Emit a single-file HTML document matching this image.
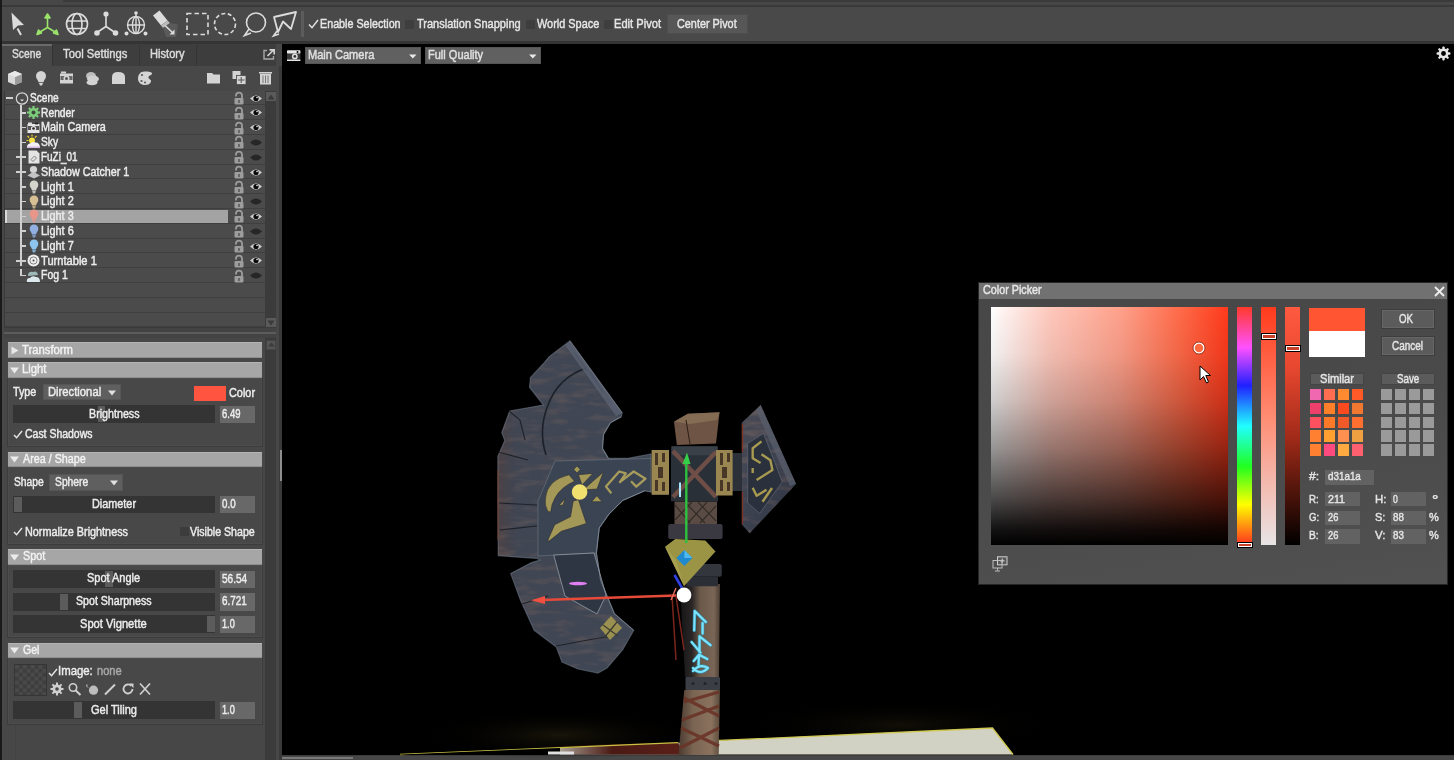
<!DOCTYPE html>
<html><head><meta charset="utf-8"><style>
*{margin:0;padding:0;box-sizing:border-box}
html,body{width:1454px;height:760px;overflow:hidden;background:#000}
body{position:relative;font-family:"Liberation Sans",sans-serif}
.a{position:absolute}
svg.a{overflow:visible}
.t{position:absolute;white-space:nowrap;line-height:1;transform-origin:0 0;font-family:"Liberation Sans",sans-serif;-webkit-text-stroke:0.45px currentColor}
</style></head><body>
<div class="a" style="left:0px;top:0px;width:1454.0px;height:6.0px;background:#474747;"></div>
<div class="a" style="left:63px;top:0px;width:1391.0px;height:2.0px;background:#3a3a3a;"></div>
<div class="a" style="left:0px;top:5px;width:1454.0px;height:2.0px;background:#393939;"></div>
<div class="a" style="left:0px;top:7px;width:1454.0px;height:34.0px;background:#494949;"></div>
<div class="a" style="left:0px;top:41px;width:1454.0px;height:3.0px;background:#343434;"></div>
<div class="a" style="left:0px;top:0px;width:1.5px;height:760.0px;background:#1a1a1a;"></div>
<div class="a" style="left:301px;top:11px;width:2.5px;height:26.0px;background:#5c5c5c;"></div>
<div class="a" style="left:405px;top:19.5px;width:9.0px;height:9.0px;background:#3e3e3e;"></div>
<div class="a" style="left:526px;top:19.5px;width:9.0px;height:9.0px;background:#3e3e3e;"></div>
<div class="a" style="left:603.5px;top:19.5px;width:9.0px;height:9.0px;background:#3e3e3e;"></div>
<svg class="a" style="left:308px;top:19px" width="11" height="10" viewBox="0 0 11 10"><path d="M1 5.5L4 8.7L10 1" fill="none" stroke="#e6e6e6" stroke-width="1.4"/></svg>
<div class="a" style="left:666.5px;top:14px;width:81.5px;height:20.0px;background:#575757;border:1px solid #4e4e4e"></div>
<svg class="a" style="left:8px;top:10px" width="290" height="28" viewBox="0 0 290 28"><path d="M3.5 2.5L16 15L10 15.5L5 20Z" fill="#dcdcdc"/><path d="M9.5 18.5L13 25" stroke="#dcdcdc" stroke-width="2"/><g stroke="#9be36a" stroke-width="1.6" fill="#9be36a" stroke-linejoin="round"><path d="M39.5 8V17.5L31 22.5M39.5 17.5L48 22.5" fill="none"/><path d="M37 8L39.5 4L42 8Z"/><path d="M29 24.5L30.5 20L33.5 23Z"/><path d="M50 24.5L48.5 20L45.5 23Z"/></g><g fill="none" stroke="#dcdcdc" stroke-width="1.6"><circle cx="69" cy="14" r="10.5"/><ellipse cx="69" cy="14" rx="5" ry="10.5"/><path d="M58.5 11H79.5M59.5 18.5H78.5"/></g><g stroke="#dcdcdc" stroke-width="1.6" fill="#dcdcdc"><path d="M98 4V16.5L89 22.5M98 16.5L107 22.5" fill="none"/><circle cx="98" cy="4" r="1.8"/><circle cx="89" cy="23" r="2"/><circle cx="107.5" cy="23" r="2"/></g><g stroke="#dcdcdc" stroke-width="1.4" fill="none"><circle cx="128" cy="15" r="8.5"/><ellipse cx="128" cy="15" rx="3.5" ry="8.5"/><path d="M119.5 15H136.5M128 2.5V24"/></g><g fill="#dcdcdc"><circle cx="128" cy="3" r="1.8"/><circle cx="118.5" cy="23.5" r="2"/><circle cx="137.5" cy="23.5" r="2"/></g><path d="M145 5.5L151.5 0.5L159.5 10.5L153 15.5Z" fill="#dcdcdc"/><path d="M153 15.5L159.5 10.5L162 13L155 18Z" fill="#bbb"/><path d="M155 18L162 13L170 14.5L168 27L158 27Z" fill="#5a5a5a"/><path d="M157 15.5L165 23" stroke="#dcdcdc" stroke-width="1.6"/><path d="M166.5 19.5V24.5H161.5Z" fill="#dcdcdc"/><rect x="179" y="3.5" width="21" height="21" fill="none" stroke="#dcdcdc" stroke-width="1.6" stroke-dasharray="4.5 3"/><circle cx="217" cy="14" r="10.5" fill="none" stroke="#dcdcdc" stroke-width="1.6" stroke-dasharray="4 2.5"/><circle cx="248" cy="12.5" r="9.5" fill="none" stroke="#dcdcdc" stroke-width="1.6"/><path d="M241 19L236.5 25.5L243 23" fill="none" stroke="#dcdcdc" stroke-width="1.6"/><path d="M266 7L288 2L283 19L275 11.5L270 22Z" fill="none" stroke="#dcdcdc" stroke-width="1.8" stroke-linejoin="round"/><path d="M269 21L265.5 26L271 24" fill="none" stroke="#dcdcdc" stroke-width="1.6"/></svg>
<div class="a" style="left:1.5px;top:44px;width:280.5px;height:22.0px;background:#3d3d3d;"></div>
<div class="a" style="left:1.5px;top:43.5px;width:50.0px;height:22.5px;background:#484848;border-top:2px solid #6a6a6a"></div>
<div class="a" style="left:52px;top:45px;width:87.5px;height:21.0px;background:#3e3e3e;border-left:1px solid #333;border-right:1px solid #353535"></div>
<div class="a" style="left:139.5px;top:45px;width:57.0px;height:21.0px;background:#3e3e3e;border-right:1px solid #353535"></div>
<div class="a" style="left:1.5px;top:66px;width:280.5px;height:694.0px;background:#484848;"></div>
<div class="a" style="left:4px;top:90.5px;width:261.5px;height:237.5px;background:#474747;border:1px solid #3a3a3a"></div>
<div class="a" style="left:265px;top:91px;width:11.0px;height:237.0px;background:#3b3b3b;"></div>
<div class="a" style="left:266px;top:92px;width:9.5px;height:9.0px;background:#5a5a5a;"></div>
<div class="a" style="left:266px;top:318px;width:9.5px;height:9.0px;background:#5a5a5a;"></div>
<svg class="a" style="left:267px;top:93.5px" width="8" height="6" viewBox="0 0 8 6"><path d="M0.5 5.5H7.5L4 0.5Z" fill="#3a3a3a"/></svg>
<svg class="a" style="left:267px;top:320px" width="8" height="6" viewBox="0 0 8 6"><path d="M0.5 0.5H7.5L4 5.5Z" fill="#3a3a3a"/></svg>
<div class="a" style="left:4px;top:328px;width:272.0px;height:10.0px;background:#434343;"></div>
<div class="a" style="left:4px;top:332px;width:272.0px;height:1.5px;background:#5c5c5c;"></div>
<div class="a" style="left:276px;top:44px;width:6.0px;height:716.0px;background:#474747;"></div>
<div class="a" style="left:279px;top:66px;width:3.0px;height:694.0px;background:#3a3a3a;"></div>
<div class="a" style="left:279.5px;top:450px;width:2.5px;height:31.0px;background:#8e8e8e;"></div>
<svg class="a" style="left:263px;top:49px" width="12" height="11" viewBox="0 0 12 11"><path d="M4 1.5H1V10H10.5V7" fill="none" stroke="#a8a8a8" stroke-width="1.4"/><path d="M4.5 7L10.5 1M6.5 0.8H11.2V5.5" fill="none" stroke="#d0d0d0" stroke-width="1.7"/></svg>
<svg class="a" style="left:7px;top:70px" width="268" height="16" viewBox="0 0 268 16"><path d="M1 4L8 1L15 4V12L8 15L1 12Z" fill="#d8d8d8"/><path d="M8 7L15 4V12L8 15Z" fill="#9a9a9a"/><path d="M1 4L8 7L15 4L8 1Z" fill="#e8e8e8"/><path d="M34 1a5 5 0 0 1 5 5.3c0 2.5-2.2 3.8-2.5 6h-5c-.3-2.2-2.5-3.5-2.5-6A5 5 0 0 1 34 1z" fill="#d4d4d4"/><path d="M32 13h4l-1 2.5h-2z" fill="#d4d4d4"/><rect x="53" y="3.5" width="13" height="10" fill="#d4d4d4"/><rect x="53.5" y="6" width="12" height="4" fill="#666"/><circle cx="59.5" cy="8.5" r="3" fill="#d4d4d4"/><circle cx="59.5" cy="8.5" r="1.5" fill="#555"/><rect x="54" y="1.5" width="5" height="2" fill="#d4d4d4"/><ellipse cx="84" cy="6" rx="5" ry="4" fill="#bdbdbd"/><ellipse cx="86" cy="9" rx="6" ry="3.5" fill="#d0d0d0"/><ellipse cx="85" cy="12.5" rx="5.5" ry="2.8" fill="#d4d4d4"/><path d="M105 14V7Q105 2 111 2Q118 2 118 7V14Z" fill="#d4d4d4"/><path d="M137.5 1.5C133 1.5 131 5 131 8.5C131 12.5 134 15 138 15C141 15 143.5 14 144 11.5C144.5 9 141 9.5 141.5 7C142 5 145 5.5 145 3.5C145 2 142 1.5 137.5 1.5Z" fill="#d4d4d4"/><circle cx="135" cy="5" r="1.1" fill="#555"/><circle cx="134.5" cy="11" r="1.1" fill="#555"/><circle cx="138" cy="12.5" r="1" fill="#555"/><path d="M200 3H205L206.5 4.5H213V13.5H200Z" fill="#d4d4d4"/><rect x="225.5" y="1" width="8" height="8" fill="#d4d4d4"/><rect x="229.5" y="5.5" width="9.5" height="9" fill="#d4d4d4" stroke="#484848" stroke-width="0.8"/><path d="M234.2 7V13M231 10H237.5" stroke="#555" stroke-width="1"/><rect x="252" y="2" width="13" height="1.6" fill="#d4d4d4"/><rect x="253" y="4" width="11" height="10.5" fill="#d4d4d4"/><path d="M256 5.5V13M258.5 5.5V13M261 5.5V13" stroke="#777" stroke-width="1"/></svg>
<div class="a" style="left:5px;top:90.6px;width:260px;height:14.8px;border-bottom:1px solid #3f3f3f;background:#4b4b4b"></div>
<div class="a" style="left:5px;top:105.4px;width:260px;height:14.8px;border-bottom:1px solid #3f3f3f;background:#4b4b4b"></div>
<div class="a" style="left:5px;top:120.2px;width:260px;height:14.8px;border-bottom:1px solid #3f3f3f;background:#4b4b4b"></div>
<div class="a" style="left:5px;top:135.0px;width:260px;height:14.8px;border-bottom:1px solid #3f3f3f;background:#4b4b4b"></div>
<div class="a" style="left:5px;top:149.8px;width:260px;height:14.8px;border-bottom:1px solid #3f3f3f;background:#4b4b4b"></div>
<div class="a" style="left:5px;top:164.6px;width:260px;height:14.8px;border-bottom:1px solid #3f3f3f;background:#4b4b4b"></div>
<div class="a" style="left:5px;top:179.4px;width:260px;height:14.8px;border-bottom:1px solid #3f3f3f;background:#4b4b4b"></div>
<div class="a" style="left:5px;top:194.2px;width:260px;height:14.8px;border-bottom:1px solid #3f3f3f;background:#4b4b4b"></div>
<div class="a" style="left:5px;top:209.0px;width:260px;height:14.8px;border-bottom:1px solid #3f3f3f;background:#4b4b4b"></div>
<div class="a" style="left:5px;top:223.8px;width:260px;height:14.8px;border-bottom:1px solid #3f3f3f;background:#4b4b4b"></div>
<div class="a" style="left:5px;top:238.6px;width:260px;height:14.8px;border-bottom:1px solid #3f3f3f;background:#4b4b4b"></div>
<div class="a" style="left:5px;top:253.4px;width:260px;height:14.8px;border-bottom:1px solid #3f3f3f;background:#4b4b4b"></div>
<div class="a" style="left:5px;top:268.2px;width:260px;height:14.8px;border-bottom:1px solid #3f3f3f;background:#4b4b4b"></div>
<div class="a" style="left:5px;top:283.0px;width:260px;height:14.8px;border-bottom:1px solid #3f3f3f;background:#4b4b4b"></div>
<div class="a" style="left:5px;top:297.8px;width:260px;height:14.8px;border-bottom:1px solid #3f3f3f;background:#4b4b4b"></div>
<div class="a" style="left:5px;top:312.6px;width:260px;height:14.8px;border-bottom:1px solid #3f3f3f;background:#4b4b4b"></div>
<div class="a" style="left:5px;top:209.8px;width:223px;height:13.5px;background:#a3a3a3;border-left:2px solid #d8d8d8"></div>
<svg class="a" style="left:233px;top:92.0px" width="12" height="13" viewBox="0 0 12 13"><path d="M9 6V3.6a3 3 0 0 0 -6 0V4.5" fill="none" stroke="#9d9d9d" stroke-width="1.8"/><rect x="1.5" y="6" width="9" height="6.5" rx="1" fill="#9d9d9d"/><rect x="5.2" y="8" width="1.6" height="3" fill="#5a5a5a"/></svg>
<svg class="a" style="left:249px;top:93.5px" width="14" height="9" viewBox="0 0 14 9"><path d="M1 4.5Q7 -1.5 13 4.5Q7 10.5 1 4.5Z" fill="#cfcfcf"/><circle cx="7" cy="4.5" r="2.6" fill="#0a0a0a"/><circle cx="8" cy="3.5" r="0.8" fill="#eee"/></svg>
<svg class="a" style="left:233px;top:106.8px" width="12" height="13" viewBox="0 0 12 13"><path d="M9 6V3.6a3 3 0 0 0 -6 0V4.5" fill="none" stroke="#9d9d9d" stroke-width="1.8"/><rect x="1.5" y="6" width="9" height="6.5" rx="1" fill="#9d9d9d"/><rect x="5.2" y="8" width="1.6" height="3" fill="#5a5a5a"/></svg>
<svg class="a" style="left:249px;top:108.3px" width="14" height="9" viewBox="0 0 14 9"><path d="M1 4.5Q7 -1.5 13 4.5Q7 10.5 1 4.5Z" fill="#cfcfcf"/><circle cx="7" cy="4.5" r="2.6" fill="#0a0a0a"/><circle cx="8" cy="3.5" r="0.8" fill="#eee"/></svg>
<svg class="a" style="left:233px;top:121.6px" width="12" height="13" viewBox="0 0 12 13"><path d="M9 6V3.6a3 3 0 0 0 -6 0V4.5" fill="none" stroke="#9d9d9d" stroke-width="1.8"/><rect x="1.5" y="6" width="9" height="6.5" rx="1" fill="#9d9d9d"/><rect x="5.2" y="8" width="1.6" height="3" fill="#5a5a5a"/></svg>
<svg class="a" style="left:249px;top:123.1px" width="14" height="9" viewBox="0 0 14 9"><path d="M1 4.5Q7 -1.5 13 4.5Q7 10.5 1 4.5Z" fill="#cfcfcf"/><circle cx="7" cy="4.5" r="2.6" fill="#0a0a0a"/><circle cx="8" cy="3.5" r="0.8" fill="#eee"/></svg>
<svg class="a" style="left:233px;top:136.4px" width="12" height="13" viewBox="0 0 12 13"><path d="M9 6V3.6a3 3 0 0 0 -6 0V4.5" fill="none" stroke="#9d9d9d" stroke-width="1.8"/><rect x="1.5" y="6" width="9" height="6.5" rx="1" fill="#9d9d9d"/><rect x="5.2" y="8" width="1.6" height="3" fill="#5a5a5a"/></svg>
<svg class="a" style="left:249px;top:137.9px" width="14" height="9" viewBox="0 0 14 9"><path d="M1 4.5Q7 -1.5 13 4.5Q7 10.5 1 4.5Z" fill="#262626"/></svg>
<svg class="a" style="left:233px;top:151.2px" width="12" height="13" viewBox="0 0 12 13"><path d="M9 6V3.6a3 3 0 0 0 -6 0V4.5" fill="none" stroke="#9d9d9d" stroke-width="1.8"/><rect x="1.5" y="6" width="9" height="6.5" rx="1" fill="#9d9d9d"/><rect x="5.2" y="8" width="1.6" height="3" fill="#5a5a5a"/></svg>
<svg class="a" style="left:249px;top:152.7px" width="14" height="9" viewBox="0 0 14 9"><path d="M1 4.5Q7 -1.5 13 4.5Q7 10.5 1 4.5Z" fill="#262626"/></svg>
<svg class="a" style="left:233px;top:166.0px" width="12" height="13" viewBox="0 0 12 13"><path d="M9 6V3.6a3 3 0 0 0 -6 0V4.5" fill="none" stroke="#9d9d9d" stroke-width="1.8"/><rect x="1.5" y="6" width="9" height="6.5" rx="1" fill="#9d9d9d"/><rect x="5.2" y="8" width="1.6" height="3" fill="#5a5a5a"/></svg>
<svg class="a" style="left:249px;top:167.5px" width="14" height="9" viewBox="0 0 14 9"><path d="M1 4.5Q7 -1.5 13 4.5Q7 10.5 1 4.5Z" fill="#cfcfcf"/><circle cx="7" cy="4.5" r="2.6" fill="#0a0a0a"/><circle cx="8" cy="3.5" r="0.8" fill="#eee"/></svg>
<svg class="a" style="left:233px;top:180.8px" width="12" height="13" viewBox="0 0 12 13"><path d="M9 6V3.6a3 3 0 0 0 -6 0V4.5" fill="none" stroke="#9d9d9d" stroke-width="1.8"/><rect x="1.5" y="6" width="9" height="6.5" rx="1" fill="#9d9d9d"/><rect x="5.2" y="8" width="1.6" height="3" fill="#5a5a5a"/></svg>
<svg class="a" style="left:249px;top:182.3px" width="14" height="9" viewBox="0 0 14 9"><path d="M1 4.5Q7 -1.5 13 4.5Q7 10.5 1 4.5Z" fill="#cfcfcf"/><circle cx="7" cy="4.5" r="2.6" fill="#0a0a0a"/><circle cx="8" cy="3.5" r="0.8" fill="#eee"/></svg>
<svg class="a" style="left:233px;top:195.6px" width="12" height="13" viewBox="0 0 12 13"><path d="M9 6V3.6a3 3 0 0 0 -6 0V4.5" fill="none" stroke="#9d9d9d" stroke-width="1.8"/><rect x="1.5" y="6" width="9" height="6.5" rx="1" fill="#9d9d9d"/><rect x="5.2" y="8" width="1.6" height="3" fill="#5a5a5a"/></svg>
<svg class="a" style="left:249px;top:197.1px" width="14" height="9" viewBox="0 0 14 9"><path d="M1 4.5Q7 -1.5 13 4.5Q7 10.5 1 4.5Z" fill="#262626"/></svg>
<svg class="a" style="left:233px;top:210.4px" width="12" height="13" viewBox="0 0 12 13"><path d="M9 6V3.6a3 3 0 0 0 -6 0V4.5" fill="none" stroke="#9d9d9d" stroke-width="1.8"/><rect x="1.5" y="6" width="9" height="6.5" rx="1" fill="#9d9d9d"/><rect x="5.2" y="8" width="1.6" height="3" fill="#5a5a5a"/></svg>
<svg class="a" style="left:249px;top:211.9px" width="14" height="9" viewBox="0 0 14 9"><path d="M1 4.5Q7 -1.5 13 4.5Q7 10.5 1 4.5Z" fill="#cfcfcf"/><circle cx="7" cy="4.5" r="2.6" fill="#0a0a0a"/><circle cx="8" cy="3.5" r="0.8" fill="#eee"/></svg>
<svg class="a" style="left:233px;top:225.2px" width="12" height="13" viewBox="0 0 12 13"><path d="M9 6V3.6a3 3 0 0 0 -6 0V4.5" fill="none" stroke="#9d9d9d" stroke-width="1.8"/><rect x="1.5" y="6" width="9" height="6.5" rx="1" fill="#9d9d9d"/><rect x="5.2" y="8" width="1.6" height="3" fill="#5a5a5a"/></svg>
<svg class="a" style="left:249px;top:226.7px" width="14" height="9" viewBox="0 0 14 9"><path d="M1 4.5Q7 -1.5 13 4.5Q7 10.5 1 4.5Z" fill="#262626"/></svg>
<svg class="a" style="left:233px;top:240.0px" width="12" height="13" viewBox="0 0 12 13"><path d="M9 6V3.6a3 3 0 0 0 -6 0V4.5" fill="none" stroke="#9d9d9d" stroke-width="1.8"/><rect x="1.5" y="6" width="9" height="6.5" rx="1" fill="#9d9d9d"/><rect x="5.2" y="8" width="1.6" height="3" fill="#5a5a5a"/></svg>
<svg class="a" style="left:249px;top:241.5px" width="14" height="9" viewBox="0 0 14 9"><path d="M1 4.5Q7 -1.5 13 4.5Q7 10.5 1 4.5Z" fill="#cfcfcf"/><circle cx="7" cy="4.5" r="2.6" fill="#0a0a0a"/><circle cx="8" cy="3.5" r="0.8" fill="#eee"/></svg>
<svg class="a" style="left:233px;top:254.8px" width="12" height="13" viewBox="0 0 12 13"><path d="M9 6V3.6a3 3 0 0 0 -6 0V4.5" fill="none" stroke="#9d9d9d" stroke-width="1.8"/><rect x="1.5" y="6" width="9" height="6.5" rx="1" fill="#9d9d9d"/><rect x="5.2" y="8" width="1.6" height="3" fill="#5a5a5a"/></svg>
<svg class="a" style="left:249px;top:256.3px" width="14" height="9" viewBox="0 0 14 9"><path d="M1 4.5Q7 -1.5 13 4.5Q7 10.5 1 4.5Z" fill="#cfcfcf"/><circle cx="7" cy="4.5" r="2.6" fill="#0a0a0a"/><circle cx="8" cy="3.5" r="0.8" fill="#eee"/></svg>
<svg class="a" style="left:233px;top:269.6px" width="12" height="13" viewBox="0 0 12 13"><path d="M9 6V3.6a3 3 0 0 0 -6 0V4.5" fill="none" stroke="#9d9d9d" stroke-width="1.8"/><rect x="1.5" y="6" width="9" height="6.5" rx="1" fill="#9d9d9d"/><rect x="5.2" y="8" width="1.6" height="3" fill="#5a5a5a"/></svg>
<svg class="a" style="left:249px;top:271.1px" width="14" height="9" viewBox="0 0 14 9"><path d="M1 4.5Q7 -1.5 13 4.5Q7 10.5 1 4.5Z" fill="#262626"/></svg>
<div class="a" style="left:20px;top:105px;width:1.6px;height:152.8px;background:#d0d0d0"></div>
<div class="a" style="left:20px;top:268.6px;width:1.6px;height:7px;background:#d0d0d0"></div>
<div class="a" style="left:21px;top:112.0px;width:5px;height:1.6px;background:#d0d0d0"></div>
<div class="a" style="left:21px;top:126.8px;width:5px;height:1.6px;background:#d0d0d0"></div>
<div class="a" style="left:21px;top:141.6px;width:5px;height:1.6px;background:#d0d0d0"></div>
<div class="a" style="left:16px;top:156.4px;width:10px;height:1.6px;background:#d0d0d0"></div>
<div class="a" style="left:20px;top:152.2px;width:1.6px;height:10px;background:#d0d0d0"></div>
<div class="a" style="left:16px;top:171.2px;width:10px;height:1.6px;background:#d0d0d0"></div>
<div class="a" style="left:20px;top:167.0px;width:1.6px;height:10px;background:#d0d0d0"></div>
<div class="a" style="left:21px;top:186.0px;width:5px;height:1.6px;background:#d0d0d0"></div>
<div class="a" style="left:21px;top:200.8px;width:5px;height:1.6px;background:#d0d0d0"></div>
<div class="a" style="left:21px;top:215.6px;width:5px;height:1.6px;background:#d0d0d0"></div>
<div class="a" style="left:21px;top:230.4px;width:5px;height:1.6px;background:#d0d0d0"></div>
<div class="a" style="left:21px;top:245.2px;width:5px;height:1.6px;background:#d0d0d0"></div>
<div class="a" style="left:16px;top:260.0px;width:10px;height:1.6px;background:#d0d0d0"></div>
<div class="a" style="left:20px;top:255.8px;width:1.6px;height:10px;background:#d0d0d0"></div>
<div class="a" style="left:21px;top:274.8px;width:5px;height:1.6px;background:#d0d0d0"></div>
<div class="a" style="left:6px;top:97.2px;width:7px;height:1.6px;background:#d0d0d0"></div>
<svg class="a" style="left:15px;top:91.5px" width="14" height="14" viewBox="0 0 14 14"><circle cx="7" cy="6.5" r="5.7" fill="none" stroke="#d8d8d8" stroke-width="1.2"/><path d="M5 7.5h4l-2 2z" fill="#ddd"/></svg>
<svg class="a" style="left:27px;top:106.3px" width="13" height="13" viewBox="0 0 13 13"><g fill="#7dcc7a"><circle cx="6.5" cy="6.5" r="4.6"/><rect x="5.4" y="0" width="2.2" height="13" transform="rotate(0 6.5 6.5)"/><rect x="5.4" y="0" width="2.2" height="13" transform="rotate(45 6.5 6.5)"/><rect x="5.4" y="0" width="2.2" height="13" transform="rotate(90 6.5 6.5)"/><rect x="5.4" y="0" width="2.2" height="13" transform="rotate(135 6.5 6.5)"/></g><circle cx="6.5" cy="6.5" r="2" fill="#3a4a3a"/></svg>
<svg class="a" style="left:27px;top:121.6px" width="13" height="12" viewBox="0 0 13 12"><rect x="0.5" y="2" width="12" height="9" fill="#e6e6e6"/><rect x="1" y="4" width="11" height="4" fill="#555"/><circle cx="6.5" cy="6.5" r="2.6" fill="#e6e6e6"/><circle cx="6.5" cy="6.5" r="1.3" fill="#222"/><rect x="1" y="0.5" width="4" height="2" fill="#ddd"/><rect x="8" y="0.8" width="3" height="1.6" fill="#222"/></svg>
<svg class="a" style="left:26px;top:134.4px" width="15" height="15" viewBox="0 0 15 15"><g stroke="#f0d020" stroke-width="1.2"><path d="M6 0.5V2.5M1.5 2L3 3.5M10.5 2L9 3.5M0.5 6.5H2.5"/></g><circle cx="6" cy="6.5" r="3" fill="#f8e040"/><path d="M1 14Q0.5 10 4 9.5Q6 7 9.5 8.5Q14 8.5 14 14Z" fill="#f4f0f4"/><path d="M1 14H14V12.5H1Z" fill="#d8b8e0"/></svg>
<svg class="a" style="left:28px;top:150.4px" width="12" height="14" viewBox="0 0 12 14"><path d="M0.5 0.5h8l3 3v10h-11z" fill="#e4e4e4"/><path d="M3 9.5l3.5-3.5 2 2-3.5 3.5z" fill="none" stroke="#777" stroke-width="0.9"/></svg>
<svg class="a" style="left:27px;top:165.0px" width="14" height="14" viewBox="0 0 14 14"><circle cx="6.5" cy="4.5" r="3.6" fill="#d4d4d4"/><path d="M3.5 8.5Q6.5 6.5 9.5 8.5L13 10.5L7 13.5L0.5 10.5Z" fill="#c4c4c4"/></svg>
<svg class="a" style="left:29px;top:179.8px" width="10" height="14" viewBox="0 0 10 14"><path d="M5 0.5a4.3 4.3 0 0 1 4.3 4.6c0 2.2-2 3.4-2.3 5.4h-4c-.3-2-2.3-3.2-2.3-5.4A4.3 4.3 0 0 1 5 0.5z" fill="#d4d4cc"/><path d="M3.2 11h3.6l-0.6 2.5h-2.4z" fill="#d4d4cc" opacity="0.8"/></svg>
<svg class="a" style="left:29px;top:194.6px" width="10" height="14" viewBox="0 0 10 14"><path d="M5 0.5a4.3 4.3 0 0 1 4.3 4.6c0 2.2-2 3.4-2.3 5.4h-4c-.3-2-2.3-3.2-2.3-5.4A4.3 4.3 0 0 1 5 0.5z" fill="#d6bf92"/><path d="M3.2 11h3.6l-0.6 2.5h-2.4z" fill="#d6bf92" opacity="0.8"/></svg>
<svg class="a" style="left:29px;top:209.4px" width="10" height="14" viewBox="0 0 10 14"><path d="M5 0.5a4.3 4.3 0 0 1 4.3 4.6c0 2.2-2 3.4-2.3 5.4h-4c-.3-2-2.3-3.2-2.3-5.4A4.3 4.3 0 0 1 5 0.5z" fill="#e8958a"/><path d="M3.2 11h3.6l-0.6 2.5h-2.4z" fill="#e8958a" opacity="0.8"/></svg>
<svg class="a" style="left:29px;top:224.2px" width="10" height="14" viewBox="0 0 10 14"><path d="M5 0.5a4.3 4.3 0 0 1 4.3 4.6c0 2.2-2 3.4-2.3 5.4h-4c-.3-2-2.3-3.2-2.3-5.4A4.3 4.3 0 0 1 5 0.5z" fill="#8fb0e0"/><path d="M3.2 11h3.6l-0.6 2.5h-2.4z" fill="#8fb0e0" opacity="0.8"/></svg>
<svg class="a" style="left:29px;top:239.0px" width="10" height="14" viewBox="0 0 10 14"><path d="M5 0.5a4.3 4.3 0 0 1 4.3 4.6c0 2.2-2 3.4-2.3 5.4h-4c-.3-2-2.3-3.2-2.3-5.4A4.3 4.3 0 0 1 5 0.5z" fill="#8cc4ee"/><path d="M3.2 11h3.6l-0.6 2.5h-2.4z" fill="#8cc4ee" opacity="0.8"/></svg>
<svg class="a" style="left:27px;top:254.3px" width="13" height="13" viewBox="0 0 13 13"><circle cx="6.5" cy="6.5" r="6" fill="#eee"/><circle cx="6.5" cy="6.5" r="3.6" fill="none" stroke="#666" stroke-width="0.8"/><circle cx="6.5" cy="6.5" r="1" fill="#444"/></svg>
<svg class="a" style="left:26px;top:268.6px" width="15" height="14" viewBox="0 0 15 14"><path d="M2 7Q2 2 7 3Q11 1 12 6Z" fill="#9fb8b8"/><path d="M1 13Q0 9 4 9Q6 6 10 8Q14 8 14 13Z" fill="#dde8ec"/></svg>
<div class="a" style="left:4px;top:338px;width:261.0px;height:422.0px;background:#474747;"></div>
<div class="a" style="left:8px;top:342px;width:254.0px;height:16.0px;background:#a6a6a6;border-top:1px solid #b4b4b4;border-bottom:1px solid #8e8e8e"></div>
<div class="a" style="left:8px;top:362px;width:254.0px;height:15.5px;background:#a6a6a6;border-top:1px solid #b4b4b4;border-bottom:1px solid #8e8e8e"></div>
<div class="a" style="left:8px;top:451.5px;width:254.0px;height:15.0px;background:#a6a6a6;border-top:1px solid #b4b4b4;border-bottom:1px solid #8e8e8e"></div>
<div class="a" style="left:8px;top:549px;width:254.0px;height:15.5px;background:#a6a6a6;border-top:1px solid #b4b4b4;border-bottom:1px solid #8e8e8e"></div>
<div class="a" style="left:8px;top:642.5px;width:254.0px;height:15.5px;background:#a6a6a6;border-top:1px solid #b4b4b4;border-bottom:1px solid #8e8e8e"></div>
<svg class="a" style="left:11px;top:346px" width="8" height="9" viewBox="0 0 8 9"><path d="M0.5 0.5L7.5 4.5L0.5 8.5Z" fill="#e8e8e8"/></svg>
<svg class="a" style="left:10px;top:366.5px" width="9" height="7" viewBox="0 0 9 7"><path d="M0 0.5H9L4.5 6.5Z" fill="#ececec"/></svg>
<svg class="a" style="left:10px;top:456px" width="9" height="7" viewBox="0 0 9 7"><path d="M0 0.5H9L4.5 6.5Z" fill="#ececec"/></svg>
<svg class="a" style="left:10px;top:553.5px" width="9" height="7" viewBox="0 0 9 7"><path d="M0 0.5H9L4.5 6.5Z" fill="#ececec"/></svg>
<svg class="a" style="left:10px;top:647px" width="9" height="7" viewBox="0 0 9 7"><path d="M0 0.5H9L4.5 6.5Z" fill="#ececec"/></svg>
<div class="a" style="left:7px;top:377.5px;width:256.0px;height:69.5px;background:#484848;border:1px solid #3c3c3c;border-top:none;box-shadow:inset 0 0 0 1px #4d4d4d"></div>
<div class="a" style="left:7px;top:466.5px;width:256.0px;height:78.0px;background:#484848;border:1px solid #3c3c3c;border-top:none;box-shadow:inset 0 0 0 1px #4d4d4d"></div>
<div class="a" style="left:7px;top:564.5px;width:256.0px;height:73.5px;background:#484848;border:1px solid #3c3c3c;border-top:none;box-shadow:inset 0 0 0 1px #4d4d4d"></div>
<div class="a" style="left:7px;top:658px;width:256.0px;height:66.5px;background:#484848;border:1px solid #3c3c3c;border-top:none;box-shadow:inset 0 0 0 1px #4d4d4d"></div>
<div class="a" style="left:43px;top:384px;width:77.5px;height:16.0px;background:#5f5f5f;border:1px solid #555"></div>
<svg class="a" style="left:108px;top:390px" width="8" height="6" viewBox="0 0 8 6"><path d="M0 0.5H8L4.0 5.5Z" fill="#e0e0e0"/></svg>
<div class="a" style="left:194px;top:385.5px;width:31.5px;height:15.5px;background:#ff5540;"></div>
<div class="a" style="left:13px;top:405px;width:202.0px;height:18.3px;background:#343434;"></div>
<div class="a" style="left:97.5px;top:406px;width:7.5px;height:16.3px;background:#5c5c5c;"></div>
<div class="a" style="left:13px;top:495.5px;width:202.0px;height:17.5px;background:#343434;"></div>
<div class="a" style="left:14px;top:496.5px;width:7.5px;height:15.5px;background:#5c5c5c;"></div>
<div class="a" style="left:13px;top:570px;width:202.0px;height:18.0px;background:#343434;"></div>
<div class="a" style="left:105px;top:571px;width:7.5px;height:16.0px;background:#5c5c5c;"></div>
<div class="a" style="left:13px;top:592.7px;width:202.0px;height:17.9px;background:#343434;"></div>
<div class="a" style="left:60px;top:593.7px;width:7.5px;height:15.9px;background:#5c5c5c;"></div>
<div class="a" style="left:13px;top:615px;width:202.0px;height:17.5px;background:#343434;"></div>
<div class="a" style="left:207px;top:616px;width:7.5px;height:15.5px;background:#5c5c5c;"></div>
<div class="a" style="left:13px;top:701.2px;width:202.0px;height:17.9px;background:#343434;"></div>
<div class="a" style="left:74px;top:702.2px;width:7.5px;height:15.9px;background:#5c5c5c;"></div>
<div class="a" style="left:220px;top:406px;width:35.0px;height:17.0px;background:#686868;"></div>
<div class="a" style="left:220px;top:496px;width:35.0px;height:17.0px;background:#686868;"></div>
<div class="a" style="left:220px;top:570.5px;width:35.0px;height:17.5px;background:#686868;"></div>
<div class="a" style="left:220px;top:593px;width:35.0px;height:17.5px;background:#686868;"></div>
<div class="a" style="left:220px;top:615.5px;width:35.0px;height:17.0px;background:#686868;"></div>
<div class="a" style="left:220px;top:701.5px;width:35.0px;height:17.5px;background:#686868;"></div>
<svg class="a" style="left:13px;top:429.5px" width="10" height="9" viewBox="0 0 10 9"><path d="M1 5L3.6 7.8L9 1" fill="none" stroke="#e6e6e6" stroke-width="1.4"/></svg>
<svg class="a" style="left:13px;top:527px" width="10" height="9" viewBox="0 0 10 9"><path d="M1 5L3.6 7.8L9 1" fill="none" stroke="#e6e6e6" stroke-width="1.4"/></svg>
<div class="a" style="left:179.5px;top:527px;width:9.0px;height:9.0px;background:#3c3c3c;"></div>
<div class="a" style="left:49px;top:473.5px;width:73.5px;height:17.0px;background:#5f5f5f;border:1px solid #555"></div>
<svg class="a" style="left:110px;top:479.5px" width="8" height="6" viewBox="0 0 8 6"><path d="M0 0.5H8L4.0 5.5Z" fill="#e0e0e0"/></svg>
<svg class="a" style="left:13.5px;top:663.5px" width="33" height="32" viewBox="0 0 33 32"><rect width="33" height="32" fill="#3e3e3e"/><rect x="1.0" y="1.0" width="3.9" height="3.9" fill="#4a4a4a"/><rect x="1.0" y="8.8" width="3.9" height="3.9" fill="#4a4a4a"/><rect x="1.0" y="16.6" width="3.9" height="3.9" fill="#4a4a4a"/><rect x="1.0" y="24.4" width="3.9" height="3.9" fill="#4a4a4a"/><rect x="4.9" y="4.9" width="3.9" height="3.9" fill="#4a4a4a"/><rect x="4.9" y="12.7" width="3.9" height="3.9" fill="#4a4a4a"/><rect x="4.9" y="20.5" width="3.9" height="3.9" fill="#4a4a4a"/><rect x="4.9" y="28.3" width="3.9" height="3.9" fill="#4a4a4a"/><rect x="8.8" y="1.0" width="3.9" height="3.9" fill="#4a4a4a"/><rect x="8.8" y="8.8" width="3.9" height="3.9" fill="#4a4a4a"/><rect x="8.8" y="16.6" width="3.9" height="3.9" fill="#4a4a4a"/><rect x="8.8" y="24.4" width="3.9" height="3.9" fill="#4a4a4a"/><rect x="12.7" y="4.9" width="3.9" height="3.9" fill="#4a4a4a"/><rect x="12.7" y="12.7" width="3.9" height="3.9" fill="#4a4a4a"/><rect x="12.7" y="20.5" width="3.9" height="3.9" fill="#4a4a4a"/><rect x="12.7" y="28.3" width="3.9" height="3.9" fill="#4a4a4a"/><rect x="16.6" y="1.0" width="3.9" height="3.9" fill="#4a4a4a"/><rect x="16.6" y="8.8" width="3.9" height="3.9" fill="#4a4a4a"/><rect x="16.6" y="16.6" width="3.9" height="3.9" fill="#4a4a4a"/><rect x="16.6" y="24.4" width="3.9" height="3.9" fill="#4a4a4a"/><rect x="20.5" y="4.9" width="3.9" height="3.9" fill="#4a4a4a"/><rect x="20.5" y="12.7" width="3.9" height="3.9" fill="#4a4a4a"/><rect x="20.5" y="20.5" width="3.9" height="3.9" fill="#4a4a4a"/><rect x="20.5" y="28.3" width="3.9" height="3.9" fill="#4a4a4a"/><rect x="24.4" y="1.0" width="3.9" height="3.9" fill="#4a4a4a"/><rect x="24.4" y="8.8" width="3.9" height="3.9" fill="#4a4a4a"/><rect x="24.4" y="16.6" width="3.9" height="3.9" fill="#4a4a4a"/><rect x="24.4" y="24.4" width="3.9" height="3.9" fill="#4a4a4a"/><rect x="28.3" y="4.9" width="3.9" height="3.9" fill="#4a4a4a"/><rect x="28.3" y="12.7" width="3.9" height="3.9" fill="#4a4a4a"/><rect x="28.3" y="20.5" width="3.9" height="3.9" fill="#4a4a4a"/><rect x="28.3" y="28.3" width="3.9" height="3.9" fill="#4a4a4a"/><rect x="0.5" y="0.5" width="32" height="31" fill="none" stroke="#353535"/></svg>
<svg class="a" style="left:48px;top:668px" width="10" height="9" viewBox="0 0 10 9"><path d="M1 5L3.6 7.8L9 1" fill="none" stroke="#e6e6e6" stroke-width="1.4"/></svg>
<svg class="a" style="left:50px;top:682px" width="102" height="14" viewBox="0 0 102 14"><g fill="#cfcfcf"><circle cx="7" cy="7" r="4.6"/><rect x="6" y="0.5" width="2" height="13" transform="rotate(0 7 7)"/><rect x="6" y="0.5" width="2" height="13" transform="rotate(45 7 7)"/><rect x="6" y="0.5" width="2" height="13" transform="rotate(90 7 7)"/><rect x="6" y="0.5" width="2" height="13" transform="rotate(135 7 7)"/></g><circle cx="7" cy="7" r="1.8" fill="#484848"/><circle cx="23" cy="5.5" r="3.7" fill="none" stroke="#cfcfcf" stroke-width="1.6"/><path d="M25.5 8.2L30.5 13" stroke="#cfcfcf" stroke-width="2"/><circle cx="43.5" cy="8.2" r="4.6" fill="#bdbdbd"/><path d="M37 2.5q-1 2 1 3" stroke="#cfcfcf" stroke-width="1" fill="none"/><path d="M55 12.5L65 2.5" stroke="#cfcfcf" stroke-width="2"/><path d="M82.5 7a4.5 4.5 0 1 1 -1.3 -3.2" fill="none" stroke="#cfcfcf" stroke-width="1.8"/><path d="M79 1.5h4.5v4.5z" fill="#cfcfcf"/><path d="M90 1.5L100 12.5M100 1.5L90 12.5" stroke="#cfcfcf" stroke-width="1.7"/></svg>
<div class="a" style="left:14.5px;top:725px;width:1.0px;height:35.0px;background:#434343;"></div>
<div class="a" style="left:265px;top:338px;width:11.0px;height:422.0px;background:#3b3b3b;"></div>
<div class="a" style="left:266px;top:339.5px;width:9.5px;height:10.0px;background:#555555;border:1px solid #444"></div>
<svg class="a" style="left:267.5px;top:342px" width="7" height="5" viewBox="0 0 7 5"><path d="M0 4.5H7L3.5 0.5Z" fill="#3c3c3c"/></svg>
<div class="a" style="left:282px;top:44px;width:1172.0px;height:711.0px;background:#000;"></div>
<div class="a" style="left:282px;top:754.5px;width:1172.0px;height:5.5px;background:#3c3c3c;"></div>
<div class="a" style="left:282px;top:755.5px;width:1172.0px;height:4.5px;background:#474747;"></div>
<div class="a" style="left:282px;top:756.7px;width:71.0px;height:2.7px;background:#7a7a7a;"></div>
<svg class="a" style="left:287px;top:50px" width="14" height="11" viewBox="0 0 14 11"><rect x="0" y="0.3" width="13.4" height="3.4" rx="0.8" fill="#e8e8e8"/><circle cx="10.5" cy="2" r="1" fill="#000"/><rect x="0" y="3.7" width="13.4" height="5.8" fill="#3a3a3a"/><rect x="0" y="9.5" width="13.4" height="1.5" fill="#e8e8e8"/><circle cx="7.8" cy="6.4" r="2.9" fill="#e0e0e0"/><circle cx="7.8" cy="6.4" r="1.4" fill="#333"/></svg>
<div class="a" style="left:305px;top:47px;width:116.2px;height:17.2px;background:#606060;border:1px solid #555"></div>
<div class="a" style="left:425px;top:47px;width:116.0px;height:17.2px;background:#606060;border:1px solid #555"></div>
<svg class="a" style="left:408.5px;top:54px" width="7.5" height="5" viewBox="0 0 7.5 5"><path d="M0 0.5H7.5L3.75 4.5Z" fill="#e8e8e8"/></svg>
<svg class="a" style="left:528.5px;top:54px" width="7.5" height="5" viewBox="0 0 7.5 5"><path d="M0 0.5H7.5L3.75 4.5Z" fill="#e8e8e8"/></svg>
<svg class="a" style="left:1436px;top:46px" width="15" height="15" viewBox="0 0 15 15"><g fill="#e6e6e6"><circle cx="7.5" cy="7.5" r="5"/><rect x="6.3" y="0.5" width="2.4" height="14" rx="1" transform="rotate(0 7.5 7.5)"/><rect x="6.3" y="0.5" width="2.4" height="14" rx="1" transform="rotate(45 7.5 7.5)"/><rect x="6.3" y="0.5" width="2.4" height="14" rx="1" transform="rotate(90 7.5 7.5)"/><rect x="6.3" y="0.5" width="2.4" height="14" rx="1" transform="rotate(135 7.5 7.5)"/></g><circle cx="7.5" cy="7.5" r="2.4" fill="#000"/></svg>
<svg class="a" style="left:0;top:0" width="1454" height="760" viewBox="0 0 1454 760">
<defs>
<linearGradient id="slate" x1="0" y1="0" x2="1" y2="1">
 <stop offset="0" stop-color="#4a4c56"/><stop offset="0.5" stop-color="#3c4150"/><stop offset="1" stop-color="#2e3340"/></linearGradient>
<linearGradient id="rust" x1="0" y1="0" x2="1" y2="0">
 <stop offset="0" stop-color="#5a3a30" stop-opacity="0.45"/><stop offset="0.12" stop-color="#4a3a3a" stop-opacity="0.1"/><stop offset="1" stop-color="#5a3a30" stop-opacity="0"/></linearGradient>
<linearGradient id="wood" x1="0" y1="0" x2="1" y2="0">
 <stop offset="0" stop-color="#4a3a30"/><stop offset="0.35" stop-color="#7a6452"/><stop offset="0.8" stop-color="#8a725e"/><stop offset="1" stop-color="#5a4a3c"/></linearGradient>
<linearGradient id="wood2" x1="0" y1="0" x2="1" y2="0">
 <stop offset="0" stop-color="#141416"/><stop offset="0.3" stop-color="#2a2626"/><stop offset="0.5" stop-color="#6a5848"/><stop offset="0.85" stop-color="#7a6656"/><stop offset="1" stop-color="#4a3c32"/></linearGradient>
<linearGradient id="gold" x1="0" y1="0" x2="1" y2="1">
 <stop offset="0" stop-color="#a89c58"/><stop offset="1" stop-color="#8a8040"/></linearGradient>
<filter id="noise" x="0" y="0" width="100%" height="100%">
 <feTurbulence type="fractalNoise" baseFrequency="0.08" numOctaves="2" seed="3" result="n"/>
 <feColorMatrix type="matrix" values="0 0 0 0 0.35  0 0 0 0 0.22  0 0 0 0 0.16  0 0 0 2.2 -1.0" result="r"/>
 <feComposite in="r" in2="SourceGraphic" operator="in"/>
</filter>
<filter id="streak" x="0" y="0" width="100%" height="100%">
 <feTurbulence type="fractalNoise" baseFrequency="0.035 0.14" numOctaves="3" seed="7" result="n"/>
 <feColorMatrix type="matrix" values="0 0 0 0 0.34  0 0 0 0 0.19  0 0 0 0 0.14  0 0 0 3.2 -1.5" result="r"/>
 <feComposite in="r" in2="SourceGraphic" operator="in"/>
</filter>
<linearGradient id="redfl" x1="0" y1="0" x2="1" y2="0"><stop offset="0" stop-color="#3a1410" stop-opacity="0"/><stop offset="0.5" stop-color="#4a1a14"/><stop offset="1" stop-color="#5a2018"/></linearGradient>
<radialGradient id="glow" cx="0.5" cy="0.5" r="0.5"><stop offset="0" stop-color="#2a2410" stop-opacity="0.8"/><stop offset="1" stop-color="#000" stop-opacity="0"/></radialGradient>
</defs>
<ellipse cx="560" cy="735" rx="140" ry="25" fill="url(#glow)" opacity="0.7"/>
<ellipse cx="900" cy="725" rx="160" ry="25" fill="url(#glow)" opacity="0.5"/>
<path d="M400 754.5L678 742.7L714.6 740.7L992.5 728L1013 754.5Z" fill="#d2d2c4"/>
<path d="M540 754.5L540 746.5L678 742.5L684 754.5Z" fill="url(#redfl)"/>
<path d="M400 754.5L678 742.7" stroke="#c8c040" stroke-width="1.3" fill="none"/>
<path d="M714.6 740.7L992.5 728L1013 754.5" stroke="#d0c850" stroke-width="1.3" fill="none"/>
<path d="M400 755L560 755L560 748L400 754.5Z" fill="#000"/>
<rect x="548" y="751.5" width="26" height="3" fill="#e0e0e0"/>
<path d="M569.9 340.9L622.2 412.9L621.2 416.8L610.4 422.8L603.5 434.6L602.5 448.4L608.4 458.3L628 458.3L651 454L651 492L644.8 490.7L622.7 500.4L608.8 514.2L599.2 528L596.4 552.9L600.6 580.6L614.4 613.7L633.7 630.3L622.7 649.7L607 668L598 673L578 669L562 662L556.3 646.9L534.2 630.3L520.4 600L510.7 573.6L531.5 562.6L540 560L537 558.4L498.3 555.7L497.9 480L497.9 456.3L504.8 440.5L501.8 432.6L509.7 411L543.3 405L529.5 387.2L530.5 377.4L544.3 362.6L549.2 356.6Z" fill="#3f4755"/>
<path d="M569.9 340.9L622.2 412.9L621.2 416.8L610.4 422.8L603.5 434.6L602.5 448.4L608.4 458.3L628 458.3L651 454L651 492L644.8 490.7L622.7 500.4L608.8 514.2L599.2 528L596.4 552.9L600.6 580.6L614.4 613.7L633.7 630.3L622.7 649.7L607 668L598 673L578 669L562 662L556.3 646.9L534.2 630.3L520.4 600L510.7 573.6L531.5 562.6L540 560L537 558.4L498.3 555.7L497.9 480L497.9 456.3L504.8 440.5L501.8 432.6L509.7 411L543.3 405L529.5 387.2L530.5 377.4L544.3 362.6L549.2 356.6Z" fill="url(#rust)"/>
<path d="M569.9 340.9L622.2 412.9L621.2 416.8L610.4 422.8L603.5 434.6L602.5 448.4L608.4 458.3L628 458.3L651 454L651 492L644.8 490.7L622.7 500.4L608.8 514.2L599.2 528L596.4 552.9L600.6 580.6L614.4 613.7L633.7 630.3L622.7 649.7L607 668L598 673L578 669L562 662L556.3 646.9L534.2 630.3L520.4 600L510.7 573.6L531.5 562.6L540 560L537 558.4L498.3 555.7L497.9 480L497.9 456.3L504.8 440.5L501.8 432.6L509.7 411L543.3 405L529.5 387.2L530.5 377.4L544.3 362.6L549.2 356.6Z" fill="#fff" filter="url(#streak)" opacity="0.2"/>
<path d="M569.9 340.9L622.2 412.9L621.2 416.8L610.4 422.8L603.5 434.6L602.5 448.4L608.4 458.3L628 458.3L651 454L651 492L644.8 490.7L622.7 500.4L608.8 514.2L599.2 528L596.4 552.9L600.6 580.6L614.4 613.7L633.7 630.3L622.7 649.7L607 668L598 673L578 669L562 662L556.3 646.9L534.2 630.3L520.4 600L510.7 573.6L531.5 562.6L540 560L537 558.4L498.3 555.7L497.9 480L497.9 456.3L504.8 440.5L501.8 432.6L509.7 411L543.3 405L529.5 387.2L530.5 377.4L544.3 362.6L549.2 356.6Z" fill="none" stroke="#707a8a" stroke-width="1.2" opacity="0.55"/>
<path d="M555 461L651 458.5L651 492L644.8 490.7L622.7 500.4L608.8 514.2L599.2 528L596.4 552.9L538 556L538 501Z" fill="#3a4452" stroke="#7a8490" stroke-width="0.8" stroke-opacity="0.6"/>
<path d="M546 455Q538 430 548 405Q558 378 586 368" fill="none" stroke="#1c2028" stroke-width="1.6"/>
<path d="M603 392L590 372" fill="none" stroke="#1c2028" stroke-width="1.4"/>
<path d="M553.7 555L594 553L606 595L597 614L565 596Z" fill="#2e3644" stroke="#8a929c" stroke-width="0.9"/>
<g fill="none" stroke="#1a1c22" stroke-width="1.1" opacity="0.85"><path d="M498 452L528 460"/><path d="M499 503L537 505"/><path d="M509 411L520 420L525 440"/><path d="M500 530L537 526"/><path d="M522 604L548 596"/><path d="M556 646L588 640L612 636"/><path d="M574 352L588 372"/></g>
<g fill="#a49858" stroke="#2a2e34" stroke-width="0.6"><path d="M545.5 498Q547 480 569 474.7L574.5 481.3Q561 487 555 498Q551 505 550.8 512L548 511.6Q544 505 545.5 498Z"/><path d="M548.2 539.2L554.7 524.7L570.5 516.8L573.2 501L578.4 499.7L586.3 523.4L578.4 526L561.3 531.3L548.2 541.8Z"/><path d="M583 490L603.4 472L597 489Z"/><path d="M578.4 474.7L592.9 473.4L582 485Z"/><path d="M577 466L580.3 469.5L577 473L573.7 469.5Z"/><path d="M591.6 501.7L596.8 495.8L602 501.7Z"/><path d="M558.7 505.5L565.3 498.4L563 505Z"/></g>
<g fill="none" stroke="#a89c5c" stroke-width="2.3" stroke-linejoin="round"><path d="M611.3 493.2L606 486.6L619.2 471.5L625.8 473.4L620.5 481.3"/><path d="M619.2 482.6L633.7 471.5L645.5 478.7L636.3 486.6L631 481.3"/></g>
<path d="M611 616L622 628L610 640L600 628Z" fill="#9a9050"/>
<path d="M603 625L618 636M617 622L604 638" stroke="#3a3a30" stroke-width="1.2"/>
<circle cx="579.6" cy="492" r="7.8" fill="#f0e070"/>
<ellipse cx="578" cy="583.5" rx="9" ry="1.8" fill="#e080f0"/>
<path d="M569.9 340.9L622.2 412.9L616 416L565 345Z" fill="#5a6272" opacity="0.8"/>
<path d="M569.9 340.9L622.2 412.9" stroke="#80848e" stroke-width="1" opacity="0.6"/>
<g fill="none" stroke="#8a96a4" stroke-width="0.9" opacity="0.7"><path d="M621.2 416.8L610.4 422.8L603.5 434.6L602.5 448.4L608.4 458.3"/><path d="M644.8 490.7L622.7 500.4L608.8 514.2L599.2 528L596.4 552.9L600.6 580.6L614.4 613.7L633.7 630.3"/></g>
<path d="M498 470L498 540" stroke="#6a4030" stroke-width="2" opacity="0.6"/>
<path d="M760.6 404.9L796.1 483.9L749.7 533.3L741.8 524.4L741.8 422.7Z" fill="url(#slate)"/>
<path d="M760.6 404.9L796.1 483.9L749.7 533.3L741.8 524.4L741.8 422.7Z" fill="#fff" filter="url(#streak)" opacity="0.3"/>
<path d="M747.7 443.4L763.5 433.5L782.3 481.9L759.6 513.5L747.7 502.7Z" fill="#2a303c" stroke="#6a7280" stroke-width="0.8" stroke-opacity="0.7"/>
<path d="M742.5 424L742.5 452M742.5 492L742.5 524" stroke="#8a3020" stroke-width="1.4" opacity="0.8"/>
<path d="M760.6 404.9L796.1 483.9L790 486L756 410Z" fill="#5a606c" opacity="0.7"/>
<g fill="none" stroke="#a89a50" stroke-width="2.4" stroke-linejoin="round"><path d="M761.5 441.4L752.7 448.3L752.7 458.2L760.6 463.1"/><path d="M761.5 454.3L770.4 460.2L772.4 470L756.6 480"/><path d="M752.7 487.8L756.6 495.7L766.5 489.8"/><path d="M762.5 501.7L772 488"/><path d="M752.7 468L752.7 473"/></g>
<rect x="731" y="453" width="11" height="38" fill="#2c3038"/>
<path d="M680 586L720 584L719 677L685 677Z" fill="url(#wood2)"/>
<path d="M684.3 690L719.9 690L718.7 755L678.4 755Z" fill="url(#wood)"/>
<g stroke="#6a3428" stroke-width="3.2" fill="none" opacity="0.9"><path d="M684 702L719 692"/><path d="M684 698L719 716"/><path d="M682 720L719 706"/><path d="M681 728L719 746"/><path d="M680 748L719 728"/></g>
<rect x="685.5" y="677" width="34.5" height="13" rx="1" fill="#3c3e46"/>
<g fill="#22242a"><circle cx="693" cy="683.5" r="1.6"/><circle cx="705" cy="683.5" r="1.6"/><circle cx="716" cy="683.5" r="1.6"/></g>
<g fill="none" stroke-linecap="round" stroke-linejoin="round"><g stroke="#1aa8e0" stroke-width="3.4" opacity="0.6"><path d="M694.7 611L694.2 630.5M694.7 611L705.8 622M702.6 623L702.6 633.6"/><path d="M691.6 642L700.5 652.6M699.5 636.3L710.5 645.2M699.5 636.3L699.5 652M693.7 661L699 654.7L707.3 659M699 655L698.5 665"/><path d="M693 668Q700 676 708 668Q700 663 693 671"/></g><g stroke="#7ae4ff" stroke-width="2.2"><path d="M694.7 611L694.2 630.5M694.7 611L705.8 622M702.6 623L702.6 633.6"/><path d="M691.6 642L700.5 652.6M699.5 636.3L710.5 645.2M699.5 636.3L699.5 652M693.7 661L699 654.7L707.3 659M699 655L698.5 665"/><path d="M693 668Q700 676 708 668Q700 663 693 671"/></g></g>
<rect x="674.5" y="501.5" width="42.5" height="22.5" fill="#5a4c44"/>
<g stroke="#2a2420" stroke-width="1.2" opacity="0.8"><path d="M675 505L690 523M685 502L705 523M698 502L716 521M675 520L692 502M688 523L707 502M700 523L716 506"/></g>
<rect x="668.2" y="524" width="54.4" height="15" rx="2" fill="#3a3840"/>
<rect x="689.5" y="564" width="32.3" height="12.8" rx="2" fill="#34363e"/>
<rect x="686.3" y="577" width="31.7" height="9.3" rx="1" fill="#2c2e36"/>
<path d="M665 546.8L675.3 539L705.3 540.5L715.5 551.6L684 586.3Z" fill="#9a9444"/>
<path d="M665 546.8L684 586.3L676 560Z" fill="#b0a858" opacity="0.6"/>
<path d="M684.4 550L692.4 558L684.4 566L676.4 558Z" fill="#1f8ad0"/>
<path d="M684.4 550L692.4 558L684.4 558Z" fill="#50b8f0"/>
<rect x="671" y="446.3" width="47" height="55" fill="#2a3038"/>
<rect x="672" y="446.3" width="45" height="9" fill="#3a4048"/>
<g stroke="#6e4e46" stroke-width="4.5" fill="none"><path d="M673 451L716 497"/><path d="M716 452L673 497"/></g>
<rect x="651.6" y="450" width="17.4" height="44.8" fill="#9a8650"/>
<rect x="716" y="450" width="16.6" height="45.5" fill="#9a8650"/>
<g fill="#3a2a20" opacity="0.85"><rect x="655" y="453" width="3" height="12"/><rect x="662" y="453" width="3" height="9"/><rect x="658" y="467" width="5" height="11"/><rect x="655" y="480" width="3" height="11"/><rect x="662" y="482" width="3" height="9"/><rect x="720" y="453" width="3" height="12"/><rect x="727" y="453" width="3" height="9"/><rect x="722" y="467" width="5" height="11"/><rect x="720" y="480" width="3" height="11"/><rect x="727" y="482" width="3" height="9"/></g>
<path d="M674 421.7L687.8 413.7L719.6 412.3L716 443.4L676.9 444.9Z" fill="#6e5444"/>
<path d="M674 421.7L687.8 413.7L719.6 412.3L717 420L690 424Z" fill="#8a7058" opacity="0.8"/>
<path d="M686 420L690 444" stroke="#2a1e18" stroke-width="1"/>
<path d="M686.3 463V543" stroke="#2ec040" stroke-width="2.4"/>
<path d="M682.5 464L687 452.5L690.5 464Z" fill="#36d048"/>
<path d="M680 482.5V497" stroke="#a8e8ff" stroke-width="2"/>
<path d="M676 595.5L542 600" stroke="#e84a3a" stroke-width="2.4"/>
<path d="M545 596L531 600.2L545 604Z" fill="#f05040"/>
<path d="M672 595L676 660M676 596L684 650" stroke="#8a2a20" stroke-width="1.5" opacity="0.9"/>
<path d="M674.5 575L682 588" stroke="#3040e0" stroke-width="2.6"/>
<circle cx="684" cy="595" r="7.4" fill="#ffffff"/>
<path d="M676 588L671 600" stroke="#e87060" stroke-width="1.4"/>
</svg>
<span class="t" style="left:319.58px;top:16.72px;font-size:13.04px;color:#e6e6e6;font-weight:normal;transform:scaleX(0.824);">Enable Selection</span>
<span class="t" style="left:417.00px;top:16.72px;font-size:13.04px;color:#e6e6e6;font-weight:normal;transform:scaleX(0.845);">Translation Snapping</span>
<span class="t" style="left:536.60px;top:16.72px;font-size:13.04px;color:#e6e6e6;font-weight:normal;transform:scaleX(0.837);">World Space</span>
<span class="t" style="left:613.65px;top:16.72px;font-size:13.04px;color:#e6e6e6;font-weight:normal;transform:scaleX(0.854);">Edit Pivot</span>
<span class="t" style="left:677.00px;top:16.72px;font-size:13.04px;color:#e6e6e6;font-weight:normal;transform:scaleX(0.832);">Center Pivot</span>
<span class="t" style="left:11.70px;top:48.13px;font-size:12.32px;color:#dcdcdc;font-weight:normal;transform:scaleX(0.836);">Scene</span>
<span class="t" style="left:63.30px;top:48.13px;font-size:12.32px;color:#dcdcdc;font-weight:normal;transform:scaleX(0.914);">Tool Settings</span>
<span class="t" style="left:149.70px;top:48.13px;font-size:12.32px;color:#dcdcdc;font-weight:normal;transform:scaleX(0.902);">History</span>
<span class="t" style="left:30.40px;top:91.77px;font-size:12.03px;color:#ececec;font-weight:normal;transform:scaleX(0.840);">Scene</span>
<span class="t" style="left:41.40px;top:106.57px;font-size:12.03px;color:#ececec;font-weight:normal;transform:scaleX(0.855);">Render</span>
<span class="t" style="left:41.40px;top:121.37px;font-size:12.03px;color:#ececec;font-weight:normal;transform:scaleX(0.899);">Main Camera</span>
<span class="t" style="left:41.40px;top:136.17px;font-size:12.03px;color:#ececec;font-weight:normal;transform:scaleX(0.849);">Sky</span>
<span class="t" style="left:41.40px;top:150.97px;font-size:12.03px;color:#ececec;font-weight:normal;transform:scaleX(0.829);">FuZi_01</span>
<span class="t" style="left:41.40px;top:165.77px;font-size:12.03px;color:#ececec;font-weight:normal;transform:scaleX(0.893);">Shadow Catcher 1</span>
<span class="t" style="left:41.40px;top:180.57px;font-size:12.03px;color:#ececec;font-weight:normal;transform:scaleX(0.907);">Light 1</span>
<span class="t" style="left:41.40px;top:195.37px;font-size:12.03px;color:#ececec;font-weight:normal;transform:scaleX(0.907);">Light 2</span>
<span class="t" style="left:41.40px;top:210.17px;font-size:12.03px;color:#ececec;font-weight:normal;transform:scaleX(0.907);">Light 3</span>
<span class="t" style="left:41.40px;top:224.97px;font-size:12.03px;color:#ececec;font-weight:normal;transform:scaleX(0.907);">Light 6</span>
<span class="t" style="left:41.40px;top:239.77px;font-size:12.03px;color:#ececec;font-weight:normal;transform:scaleX(0.907);">Light 7</span>
<span class="t" style="left:41.40px;top:254.57px;font-size:12.03px;color:#ececec;font-weight:normal;transform:scaleX(0.925);">Turntable 1</span>
<span class="t" style="left:41.40px;top:269.37px;font-size:12.03px;color:#ececec;font-weight:normal;transform:scaleX(0.873);">Fog 1</span>
<span class="t" style="left:22.30px;top:343.77px;font-size:12.03px;color:#f2f2f2;font-weight:normal;transform:scaleX(0.938);">Transform</span>
<span class="t" style="left:22.30px;top:363.27px;font-size:12.03px;color:#f2f2f2;font-weight:normal;transform:scaleX(0.936);">Light</span>
<span class="t" style="left:13.40px;top:385.77px;font-size:12.03px;color:#ececec;font-weight:normal;transform:scaleX(0.895);">Type</span>
<span class="t" style="left:47.50px;top:385.77px;font-size:12.03px;color:#ececec;font-weight:normal;transform:scaleX(0.936);">Directional</span>
<span class="t" style="left:229.00px;top:386.77px;font-size:12.03px;color:#ececec;font-weight:normal;transform:scaleX(0.906);">Color</span>
<span class="t" style="left:88.50px;top:407.57px;font-size:12.03px;color:#ececec;font-weight:normal;transform:scaleX(0.890);">Brightness</span>
<span class="t" style="left:222.00px;top:407.77px;font-size:12.03px;color:#ececec;font-weight:normal;transform:scaleX(0.789);">6.49</span>
<span class="t" style="left:25.00px;top:427.77px;font-size:12.03px;color:#ececec;font-weight:normal;transform:scaleX(0.871);">Cast Shadows</span>
<span class="t" style="left:22.50px;top:452.77px;font-size:12.03px;color:#f2f2f2;font-weight:normal;transform:scaleX(0.894);">Area / Shape</span>
<span class="t" style="left:13.50px;top:475.77px;font-size:12.03px;color:#ececec;font-weight:normal;transform:scaleX(0.856);">Shape</span>
<span class="t" style="left:54.50px;top:475.77px;font-size:12.03px;color:#ececec;font-weight:normal;transform:scaleX(0.858);">Sphere</span>
<span class="t" style="left:91.50px;top:497.67px;font-size:12.03px;color:#ececec;font-weight:normal;transform:scaleX(0.903);">Diameter</span>
<span class="t" style="left:221.50px;top:497.77px;font-size:12.03px;color:#ececec;font-weight:normal;transform:scaleX(0.811);">0.0</span>
<span class="t" style="left:24.50px;top:525.57px;font-size:12.03px;color:#ececec;font-weight:normal;transform:scaleX(0.902);">Normalize Brightness</span>
<span class="t" style="left:190.00px;top:525.77px;font-size:12.03px;color:#ececec;font-weight:normal;transform:scaleX(0.883);">Visible Shape</span>
<span class="t" style="left:22.50px;top:550.47px;font-size:12.03px;color:#f2f2f2;font-weight:normal;transform:scaleX(0.906);">Spot</span>
<span class="t" style="left:87.00px;top:572.47px;font-size:12.03px;color:#ececec;font-weight:normal;transform:scaleX(0.914);">Spot Angle</span>
<span class="t" style="left:221.50px;top:572.77px;font-size:12.03px;color:#ececec;font-weight:normal;transform:scaleX(0.839);">56.54</span>
<span class="t" style="left:75.50px;top:595.47px;font-size:12.03px;color:#ececec;font-weight:normal;transform:scaleX(0.883);">Spot Sharpness</span>
<span class="t" style="left:222.00px;top:595.47px;font-size:12.03px;color:#ececec;font-weight:normal;transform:scaleX(0.823);">6.721</span>
<span class="t" style="left:80.00px;top:617.77px;font-size:12.03px;color:#ececec;font-weight:normal;transform:scaleX(0.927);">Spot Vignette</span>
<span class="t" style="left:222.00px;top:617.77px;font-size:12.03px;color:#ececec;font-weight:normal;transform:scaleX(0.764);">1.0</span>
<span class="t" style="left:22.70px;top:644.17px;font-size:12.03px;color:#f2f2f2;font-weight:normal;transform:scaleX(0.876);">Gel</span>
<span class="t" style="left:58.05px;top:664.77px;font-size:12.03px;color:#ececec;font-weight:normal;transform:scaleX(0.946);">Image:</span>
<span class="t" style="left:96.50px;top:664.77px;font-size:12.03px;color:#a8a8a8;font-weight:normal;transform:scaleX(0.924);">none</span>
<span class="t" style="left:90.50px;top:703.97px;font-size:12.03px;color:#ececec;font-weight:normal;transform:scaleX(0.917);">Gel Tiling</span>
<span class="t" style="left:222.00px;top:703.97px;font-size:12.03px;color:#ececec;font-weight:normal;transform:scaleX(0.764);">1.0</span>
<span class="t" style="left:308.00px;top:48.83px;font-size:12.32px;color:#e0e0e0;font-weight:normal;transform:scaleX(0.897);">Main Camera</span>
<span class="t" style="left:427.70px;top:48.83px;font-size:12.32px;color:#e0e0e0;font-weight:normal;transform:scaleX(0.895);">Full Quality</span>
<div class="a" style="left:979px;top:283px;width:468.0px;height:301.0px;background:linear-gradient(170deg,#474747 0%,#4a4a4a 50%,#515151 100%);box-shadow:0 0 0 1px #262626"></div>
<div class="a" style="left:979px;top:283px;width:468.0px;height:16.2px;background:#717171;"></div>
<svg class="a" style="left:1433.5px;top:285.5px" width="11" height="11" viewBox="0 0 11 11"><path d="M1 1L10 10M10 1L1 10" stroke="#eeeeee" stroke-width="1.8"/></svg>
<div class="a" style="left:990.5px;top:307.3px;width:237.5px;height:237.7px;background:linear-gradient(to bottom,rgba(0,0,0,0) 0%,rgba(0,0,0,0.06) 20%,rgba(0,0,0,0.2) 40%,rgba(0,0,0,0.42) 60%,rgba(0,0,0,0.7) 80%,rgba(0,0,0,0.92) 93%,#000 100%),linear-gradient(to right,#fff 0%,#ffc8bc 25%,#ffa08a 55%,#ff6a48 80%,#ff3a1c 100%)"></div>
<svg class="a" style="left:1192px;top:341px" width="14" height="14" viewBox="0 0 14 14"><circle cx="7" cy="7" r="5" fill="#ff6a40" stroke="#fff" stroke-width="1.4"/><circle cx="7" cy="7" r="6" fill="none" stroke="#602010" stroke-width="0.6"/></svg>
<svg class="a" style="left:1199px;top:365px" width="14" height="20" viewBox="0 0 14 20"><path d="M1 1V15L4.5 11.5L7.5 18L9.5 17L6.8 10.5H11.5Z" fill="#fff" stroke="#000" stroke-width="1"/></svg>
<div class="a" style="left:1237px;top:307.3px;width:15.3px;height:237.7px;background:linear-gradient(to bottom,#ff3a2a 0%,#ff50ff 17%,#2020ff 33%,#20ffff 50%,#20ff20 67%,#ffff00 83%,#ff3020 100%)"></div>
<div class="a" style="left:1261px;top:307.3px;width:15.2px;height:237.7px;background:linear-gradient(to bottom,#ff3a1c 0%,#ff8a70 45%,#e8e4e6 100%)"></div>
<div class="a" style="left:1285px;top:307.3px;width:15.2px;height:237.7px;background:linear-gradient(to bottom,#ff5a40 0%,#e84830 25%,#a02a18 55%,#401008 82%,#000 100%)"></div>
<div class="a" style="left:1236.5px;top:541.5px;width:16.5px;height:6.5px;border:1px solid #000;box-shadow:inset 0 0 0 1px #fff;background:#c8402a"></div>
<div class="a" style="left:1260.5px;top:333.3px;width:16.5px;height:6.5px;border:1px solid #000;box-shadow:inset 0 0 0 1px #fff;background:#c8402a"></div>
<div class="a" style="left:1284.5px;top:345.2px;width:16.5px;height:6.5px;border:1px solid #000;box-shadow:inset 0 0 0 1px #fff;background:#c8402a"></div>
<div class="a" style="left:1309.2px;top:307.7px;width:55.9px;height:23.7px;background:#ff5533;"></div>
<div class="a" style="left:1309.2px;top:331.4px;width:55.9px;height:25.8px;background:#ffffff;"></div>
<div class="a" style="left:1380.6px;top:308.8px;width:54.1px;height:20.2px;background:#5b5b5b;border:1px solid #3d3d3d;box-shadow:inset 0 0 0 1px #666"></div>
<div class="a" style="left:1380.6px;top:336px;width:54.1px;height:20.0px;background:#5b5b5b;border:1px solid #3d3d3d;box-shadow:inset 0 0 0 1px #666"></div>
<div class="a" style="left:1309.9px;top:372.8px;width:54.5px;height:12.7px;background:#5b5b5b;border:1px solid #444"></div>
<div class="a" style="left:1380.6px;top:372.8px;width:54.1px;height:12.7px;background:#5b5b5b;border:1px solid #444"></div>
<div class="a" style="left:1309.7px;top:388.9px;width:11.5px;height:11.5px;background:#f068b0;"></div>
<div class="a" style="left:1380.8px;top:388.9px;width:11.5px;height:11.5px;background:#9a9a9a;"></div>
<div class="a" style="left:1323.7px;top:388.9px;width:11.5px;height:11.5px;background:#ff6e50;"></div>
<div class="a" style="left:1394.8px;top:388.9px;width:11.5px;height:11.5px;background:#9a9a9a;"></div>
<div class="a" style="left:1337.7px;top:388.9px;width:11.5px;height:11.5px;background:#ff8a30;"></div>
<div class="a" style="left:1408.8px;top:388.9px;width:11.5px;height:11.5px;background:#9a9a9a;"></div>
<div class="a" style="left:1351.7px;top:388.9px;width:11.5px;height:11.5px;background:#ff5a28;"></div>
<div class="a" style="left:1422.8px;top:388.9px;width:11.5px;height:11.5px;background:#9a9a9a;"></div>
<div class="a" style="left:1309.7px;top:402.75px;width:11.5px;height:11.5px;background:#ee406a;"></div>
<div class="a" style="left:1380.8px;top:402.75px;width:11.5px;height:11.5px;background:#9a9a9a;"></div>
<div class="a" style="left:1323.7px;top:402.75px;width:11.5px;height:11.5px;background:#ff8028;"></div>
<div class="a" style="left:1394.8px;top:402.75px;width:11.5px;height:11.5px;background:#9a9a9a;"></div>
<div class="a" style="left:1337.7px;top:402.75px;width:11.5px;height:11.5px;background:#ff4a20;"></div>
<div class="a" style="left:1408.8px;top:402.75px;width:11.5px;height:11.5px;background:#9a9a9a;"></div>
<div class="a" style="left:1351.7px;top:402.75px;width:11.5px;height:11.5px;background:#f07830;"></div>
<div class="a" style="left:1422.8px;top:402.75px;width:11.5px;height:11.5px;background:#9a9a9a;"></div>
<div class="a" style="left:1309.7px;top:416.59999999999997px;width:11.5px;height:11.5px;background:#ff5060;"></div>
<div class="a" style="left:1380.8px;top:416.59999999999997px;width:11.5px;height:11.5px;background:#9a9a9a;"></div>
<div class="a" style="left:1323.7px;top:416.59999999999997px;width:11.5px;height:11.5px;background:#ff7a28;"></div>
<div class="a" style="left:1394.8px;top:416.59999999999997px;width:11.5px;height:11.5px;background:#9a9a9a;"></div>
<div class="a" style="left:1337.7px;top:416.59999999999997px;width:11.5px;height:11.5px;background:#f05a28;"></div>
<div class="a" style="left:1408.8px;top:416.59999999999997px;width:11.5px;height:11.5px;background:#9a9a9a;"></div>
<div class="a" style="left:1351.7px;top:416.59999999999997px;width:11.5px;height:11.5px;background:#ff7030;"></div>
<div class="a" style="left:1422.8px;top:416.59999999999997px;width:11.5px;height:11.5px;background:#9a9a9a;"></div>
<div class="a" style="left:1309.7px;top:430.45px;width:11.5px;height:11.5px;background:#ff8030;"></div>
<div class="a" style="left:1380.8px;top:430.45px;width:11.5px;height:11.5px;background:#9a9a9a;"></div>
<div class="a" style="left:1323.7px;top:430.45px;width:11.5px;height:11.5px;background:#ffa030;"></div>
<div class="a" style="left:1394.8px;top:430.45px;width:11.5px;height:11.5px;background:#9a9a9a;"></div>
<div class="a" style="left:1337.7px;top:430.45px;width:11.5px;height:11.5px;background:#ff9050;"></div>
<div class="a" style="left:1408.8px;top:430.45px;width:11.5px;height:11.5px;background:#9a9a9a;"></div>
<div class="a" style="left:1351.7px;top:430.45px;width:11.5px;height:11.5px;background:#f0a040;"></div>
<div class="a" style="left:1422.8px;top:430.45px;width:11.5px;height:11.5px;background:#9a9a9a;"></div>
<div class="a" style="left:1309.7px;top:444.29999999999995px;width:11.5px;height:11.5px;background:#ff8030;"></div>
<div class="a" style="left:1380.8px;top:444.29999999999995px;width:11.5px;height:11.5px;background:#9a9a9a;"></div>
<div class="a" style="left:1323.7px;top:444.29999999999995px;width:11.5px;height:11.5px;background:#ff4a80;"></div>
<div class="a" style="left:1394.8px;top:444.29999999999995px;width:11.5px;height:11.5px;background:#9a9a9a;"></div>
<div class="a" style="left:1337.7px;top:444.29999999999995px;width:11.5px;height:11.5px;background:#ffaa40;"></div>
<div class="a" style="left:1408.8px;top:444.29999999999995px;width:11.5px;height:11.5px;background:#9a9a9a;"></div>
<div class="a" style="left:1351.7px;top:444.29999999999995px;width:11.5px;height:11.5px;background:#ff6070;"></div>
<div class="a" style="left:1422.8px;top:444.29999999999995px;width:11.5px;height:11.5px;background:#9a9a9a;"></div>
<div class="a" style="left:1324.8px;top:469.8px;width:49.3px;height:15.0px;background:#626262;"></div>
<div class="a" style="left:1324.8px;top:491.7px;width:35.4px;height:14.6px;background:#626262;"></div>
<div class="a" style="left:1390.7px;top:491.7px;width:35.4px;height:14.6px;background:#626262;"></div>
<div class="a" style="left:1324.8px;top:510.8px;width:35.4px;height:14.6px;background:#626262;"></div>
<div class="a" style="left:1390.7px;top:510.8px;width:35.4px;height:14.6px;background:#626262;"></div>
<div class="a" style="left:1324.8px;top:529.3px;width:35.4px;height:14.6px;background:#626262;"></div>
<div class="a" style="left:1390.7px;top:529.3px;width:35.4px;height:14.6px;background:#626262;"></div>
<svg class="a" style="left:992px;top:555.5px" width="16" height="16" viewBox="0 0 16 16"><rect x="5.5" y="0.8" width="9.5" height="8" fill="#595959" stroke="#cfcfcf" stroke-width="1"/><path d="M10.2 2.5V7M8 4.8H12.5" stroke="#ddd" stroke-width="1"/><rect x="1" y="4.5" width="9" height="7.5" fill="none" stroke="#bdbdbd" stroke-width="1"/><path d="M5.5 12V14.5M3 15H8" stroke="#bdbdbd" stroke-width="1"/></svg>
<span class="t" style="left:983.00px;top:284.47px;font-size:12.03px;color:#e6e6e6;font-weight:normal;transform:scaleX(0.896);">Color Picker</span>
<span class="t" style="left:1399.00px;top:313.27px;font-size:12.03px;color:#e4e4e4;font-weight:normal;transform:scaleX(0.807);">OK</span>
<span class="t" style="left:1392.00px;top:340.27px;font-size:12.03px;color:#e4e4e4;font-weight:normal;transform:scaleX(0.830);">Cancel</span>
<span class="t" style="left:1320.00px;top:373.27px;font-size:12.03px;color:#e4e4e4;font-weight:normal;transform:scaleX(0.926);">Similar</span>
<span class="t" style="left:1396.50px;top:373.27px;font-size:12.03px;color:#e4e4e4;font-weight:normal;transform:scaleX(0.812);">Save</span>
<span class="t" style="left:1308.90px;top:470.65px;font-size:11.59px;color:#e4e4e4;font-weight:normal;transform:scaleX(1.049);">#:</span>
<span class="t" style="left:1327.70px;top:470.65px;font-size:11.59px;color:#e4e4e4;font-weight:normal;transform:scaleX(0.850);">d31a1a</span>
<span class="t" style="left:1309.00px;top:493.75px;font-size:11.59px;color:#e4e4e4;font-weight:normal;transform:scaleX(0.836);">R:</span>
<span class="t" style="left:1309.00px;top:511.95px;font-size:11.59px;color:#e4e4e4;font-weight:normal;transform:scaleX(0.833);">G:</span>
<span class="t" style="left:1309.00px;top:530.45px;font-size:11.59px;color:#e4e4e4;font-weight:normal;transform:scaleX(0.886);">B:</span>
<span class="t" style="left:1327.50px;top:493.75px;font-size:11.59px;color:#e4e4e4;font-weight:normal;transform:scaleX(0.916);">211</span>
<span class="t" style="left:1327.50px;top:511.95px;font-size:11.59px;color:#e4e4e4;font-weight:normal;transform:scaleX(0.804);">26</span>
<span class="t" style="left:1327.50px;top:530.45px;font-size:11.59px;color:#e4e4e4;font-weight:normal;transform:scaleX(0.804);">26</span>
<span class="t" style="left:1375.30px;top:493.75px;font-size:11.59px;color:#e4e4e4;font-weight:normal;transform:scaleX(0.986);">H:</span>
<span class="t" style="left:1375.30px;top:511.95px;font-size:11.59px;color:#e4e4e4;font-weight:normal;transform:scaleX(0.951);">S:</span>
<span class="t" style="left:1375.30px;top:530.45px;font-size:11.59px;color:#e4e4e4;font-weight:normal;transform:scaleX(0.991);">V:</span>
<span class="t" style="left:1393.00px;top:493.75px;font-size:11.59px;color:#e4e4e4;font-weight:normal;transform:scaleX(0.750);">0</span>
<span class="t" style="left:1393.00px;top:511.95px;font-size:11.59px;color:#e4e4e4;font-weight:normal;transform:scaleX(0.844);">88</span>
<span class="t" style="left:1393.00px;top:530.45px;font-size:11.59px;color:#e4e4e4;font-weight:normal;transform:scaleX(0.844);">83</span>
<span class="t" style="left:1432.00px;top:494.15px;font-size:11.59px;color:#e4e4e4;font-weight:normal;transform:scaleX(1.375);">°</span>
<span class="t" style="left:1429.00px;top:511.95px;font-size:11.59px;color:#e4e4e4;font-weight:normal;transform:scaleX(0.950);">%</span>
<span class="t" style="left:1429.00px;top:530.45px;font-size:11.59px;color:#e4e4e4;font-weight:normal;transform:scaleX(0.950);">%</span>
</body></html>
